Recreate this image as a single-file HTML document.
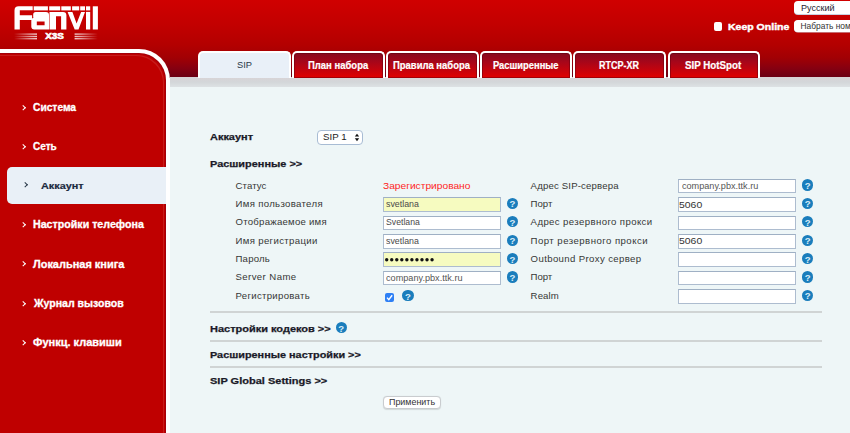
<!DOCTYPE html>
<html><head><meta charset="utf-8">
<style>
*{margin:0;padding:0;box-sizing:border-box}
html,body{width:850px;height:433px;overflow:hidden;background:#eef6f7;font-family:"Liberation Sans",sans-serif}
.a{position:absolute}
.t{position:absolute;white-space:nowrap;line-height:1;transform-origin:0 0}
#hdr{left:0;top:0;width:850px;height:78px;background:linear-gradient(#d00000 0px,#c20000 25px,#b30000 45px,#a10004 58px,#870010 68px,#6b0014 77px)}
#band{left:170px;top:77px;width:680px;height:10px;background:linear-gradient(#d9d4d7,#d3d6d9 50%,#dde2e4)}
#side{left:-4px;top:49px;width:174px;height:400px;background:#bf0000;box-shadow:inset -1px 1px 0 #a3000a,inset -2px 2px 0 #bf0000,inset -3px 3px 0 #c51c1c;border:4px solid #fff;border-left:0;border-top-right-radius:31px}
.arr{position:absolute;width:3.5px;height:3.5px;border-right:1.4px solid #fff;border-bottom:1.4px solid #fff;transform:rotate(-45deg)}
#act{left:7px;top:167px;width:159px;height:36.5px;background:#e9f0f7;border-radius:5px 0 0 5px}
.tab{position:absolute;top:50.8px;height:27px;width:92.5px;border:2px solid #fff;border-bottom:0;border-radius:5px 5px 0 0;background:linear-gradient(#850a1e,#a6061a 35%,#e20000);box-shadow:inset 0 0 0 1px rgba(90,0,15,0.45)}
.inp{position:absolute;width:118px;height:14.6px;background:#fff;border:1px solid #adbccf;border-top-color:#9fb0c4}
.y{background:#f6fbc0}
.q{position:absolute;width:11.2px;height:11.2px;border-radius:50%;background:#1a7dbc}
.hr{position:absolute;left:210px;width:612px;height:1.5px;background:#d0d4d4}
</style></head><body>
<div id="hdr" class="a"></div>
<div id="band" class="a"></div>

<svg class="a" style="left:0;top:0" width="120" height="45" viewBox="0 0 120 45">
  <defs>
    <linearGradient id="gl" x1="0" x2="1"><stop offset="0" stop-color="#fff" stop-opacity="0"/><stop offset="0.7" stop-color="#fff" stop-opacity="0.6"/><stop offset="1" stop-color="#fff" stop-opacity="0.8"/></linearGradient>
    <linearGradient id="gr" x1="1" x2="0"><stop offset="0" stop-color="#fff" stop-opacity="0"/><stop offset="0.7" stop-color="#fff" stop-opacity="0.6"/><stop offset="1" stop-color="#fff" stop-opacity="0.8"/></linearGradient>
  </defs>
  <g fill="#fff">
    <path d="M14.5 29.5V10.5Q14.5 6.3 18.7 6.3H32.7V10.3H19.8V15.2H32.1V19.9H19.8V29.5Z"/>
    <rect x="33.7" y="6.3" width="14.2" height="4.1"/>
    <rect x="49.2" y="6.3" width="11" height="4.1"/>
    <rect x="61.3" y="6.3" width="9.5" height="4.1"/>
    <rect x="72.1" y="6.3" width="7.1" height="4.1"/>
    <rect x="80.2" y="6.3" width="4.8" height="4.1"/>
    <rect x="86" y="6.3" width="4.2" height="4.1"/>
    <path d="M35.7 12H46Q49 12 49 15V29.4H34.3Q31.3 29.4 31.3 26.4V20.8Q31.3 17.8 34.3 17.8H33.2V14.5Q33.2 12 35.7 12Z M36.8 21.6V25.3H44.6V21.6Z" fill-rule="evenodd"/>
    <path d="M49.5 29.5V11.9H63Q66.4 11.9 66.4 15.3V29.5H61.1V16.3H56V29.5Z"/>
    <path d="M67.6 11.9H72.4L76.6 23.4L81.1 11.9H85L78.5 29.5H74.7Z"/>
    <rect x="86" y="11.9" width="4.2" height="17.6"/>
    <rect x="92.8" y="6.3" width="5.1" height="23.2"/>
  </g>
  <g>
    <rect x="14" y="33.4" width="23" height="1.4" fill="url(#gl)"/>
    <rect x="14" y="35.8" width="23" height="1.4" fill="url(#gl)"/>
    <rect x="14" y="38" width="23" height="1.4" fill="url(#gl)"/>
    <rect x="74.6" y="33.4" width="23.2" height="1.4" fill="url(#gr)"/>
    <rect x="74.6" y="35.8" width="23.2" height="1.4" fill="url(#gr)"/>
    <rect x="74.6" y="38" width="23.2" height="1.4" fill="url(#gr)"/>
  </g>
  <text x="0" y="0" transform="translate(45.3 39.3) scale(1.12 1)" font-family="Liberation Sans" font-weight="bold" font-size="8.8" fill="#fff" stroke="#fff" stroke-width="0.6">X3S</text>
</svg>

<div class="a" style="left:713.6px;top:22.1px;width:8.8px;height:8.8px;background:#fff;border-radius:2px"></div>
<div class="a" style="left:794px;top:1.1px;width:70px;height:13.2px;background:#fff;border-radius:4px;box-shadow:0 1px 0 #c9d2e2"></div>
<div class="a" style="left:794.2px;top:19.6px;width:70px;height:12.6px;background:#fff;border-radius:4px;box-shadow:0 0.6px 0 #d0d6e0"></div>
<div id="side" class="a"></div>
<div id="act" class="a"></div>
<div class="arr" style="left:20.8px;top:105.50px;border-color:#fff"></div>
<div class="arr" style="left:20.8px;top:144.73px;border-color:#fff"></div>
<div class="arr" style="left:22.6px;top:182.86px;border-color:#2a3a4a"></div>
<div class="arr" style="left:20.8px;top:223.19px;border-color:#fff"></div>
<div class="arr" style="left:20.8px;top:262.42px;border-color:#fff"></div>
<div class="arr" style="left:20.8px;top:301.65px;border-color:#fff"></div>
<div class="arr" style="left:20.8px;top:340.88px;border-color:#fff"></div>
<div class="tab" style="left:198px;background:#e9f0f8;box-shadow:none;"></div>
<div class="tab" style="left:292px;"></div>
<div class="tab" style="left:386px;"></div>
<div class="tab" style="left:479.5px;"></div>
<div class="tab" style="left:573.3px;"></div>
<div class="tab" style="left:667.5px;"></div>
<div class="a" style="left:316.6px;top:129.6px;width:46.4px;height:15.2px;background:#fff;border:1.2px solid #a8bcd4;border-radius:4px"></div>
<svg class="a" style="left:354px;top:133px" width="6" height="9" viewBox="0 0 6 9"><path d="M3 0.8L5.2 3.6H0.8Z M3 8.3L5.2 5.3H0.8Z" fill="#111"/></svg>
<div class="inp" style="left:678px;top:178.75px"></div>
<div class="q" style="left:802.1px;top:179.40px"></div>
<div class="inp" style="left:678px;top:197.15px"></div>
<div class="q" style="left:802.1px;top:197.80px"></div>
<div class="inp y" style="left:383px;top:197.15px"></div>
<div class="q" style="left:506.9px;top:197.80px"></div>
<div class="inp" style="left:678px;top:215.55px"></div>
<div class="q" style="left:802.1px;top:216.20px"></div>
<div class="inp" style="left:383px;top:215.55px"></div>
<div class="q" style="left:506.9px;top:216.20px"></div>
<div class="inp" style="left:678px;top:233.95px"></div>
<div class="q" style="left:802.1px;top:234.60px"></div>
<div class="inp" style="left:383px;top:233.95px"></div>
<div class="q" style="left:506.9px;top:234.60px"></div>
<div class="inp" style="left:678px;top:252.35px"></div>
<div class="q" style="left:802.1px;top:253.00px"></div>
<div class="inp y" style="left:383px;top:252.35px"></div>
<div class="q" style="left:506.9px;top:253.00px"></div>
<div class="inp" style="left:678px;top:270.75px"></div>
<div class="q" style="left:802.1px;top:271.40px"></div>
<div class="inp" style="left:383px;top:270.75px"></div>
<div class="q" style="left:506.9px;top:271.40px"></div>
<div class="inp" style="left:678px;top:289.15px"></div>
<div class="q" style="left:802.1px;top:289.80px"></div>
<svg class="a" style="left:385px;top:258.3px" width="52" height="4" viewBox="0 0 52 4" fill="#111"><circle cx="1.70" cy="1.8" r="1.7"/><circle cx="6.74" cy="1.8" r="1.7"/><circle cx="11.78" cy="1.8" r="1.7"/><circle cx="16.82" cy="1.8" r="1.7"/><circle cx="21.86" cy="1.8" r="1.7"/><circle cx="26.90" cy="1.8" r="1.7"/><circle cx="31.94" cy="1.8" r="1.7"/><circle cx="36.98" cy="1.8" r="1.7"/><circle cx="42.02" cy="1.8" r="1.7"/><circle cx="47.06" cy="1.8" r="1.7"/></svg>
<div class="a" style="left:385px;top:292.6px;width:9px;height:9px;background:#2d7ff5;border-radius:2px"></div>
<svg class="a" style="left:385px;top:292.6px" width="9" height="9" viewBox="0 0 9 9"><path d="M2 4.6L3.8 6.6L7.2 2.2" stroke="#fff" stroke-width="1.4" fill="none"/></svg>
<div class="q" style="left:402.4px;top:290.2px"></div>
<div class="hr" style="top:311px"></div>
<div class="q" style="left:335.6px;top:322.1px"></div>
<div class="hr" style="top:340px"></div>
<div class="hr" style="top:366px"></div>
<div class="a" style="left:383.2px;top:395.6px;width:58px;height:13px;background:#fff;border:1px solid #c9cccf;border-radius:4px;box-shadow:0 0.5px 1px rgba(0,0,0,0.12)"></div>
<div class="t" style="left:804.70px;top:181.00px;font-size:9.6px;font-weight:bold;color:#d6ebf7">?</div><div class="t" style="left:804.70px;top:199.40px;font-size:9.6px;font-weight:bold;color:#d6ebf7">?</div><div class="t" style="left:509.50px;top:199.40px;font-size:9.6px;font-weight:bold;color:#d6ebf7">?</div><div class="t" style="left:804.70px;top:217.80px;font-size:9.6px;font-weight:bold;color:#d6ebf7">?</div><div class="t" style="left:509.50px;top:217.80px;font-size:9.6px;font-weight:bold;color:#d6ebf7">?</div><div class="t" style="left:804.70px;top:236.20px;font-size:9.6px;font-weight:bold;color:#d6ebf7">?</div><div class="t" style="left:509.50px;top:236.20px;font-size:9.6px;font-weight:bold;color:#d6ebf7">?</div><div class="t" style="left:804.70px;top:254.60px;font-size:9.6px;font-weight:bold;color:#d6ebf7">?</div><div class="t" style="left:509.50px;top:254.60px;font-size:9.6px;font-weight:bold;color:#d6ebf7">?</div><div class="t" style="left:804.70px;top:273.00px;font-size:9.6px;font-weight:bold;color:#d6ebf7">?</div><div class="t" style="left:509.50px;top:273.00px;font-size:9.6px;font-weight:bold;color:#d6ebf7">?</div><div class="t" style="left:804.70px;top:291.40px;font-size:9.6px;font-weight:bold;color:#d6ebf7">?</div><div class="t" style="left:405.00px;top:291.80px;font-size:9.6px;font-weight:bold;color:#d6ebf7">?</div><div class="t" style="left:338.20px;top:323.70px;font-size:9.6px;font-weight:bold;color:#d6ebf7">?</div>
<div class="t" style="left:33.00px;top:103.00px;font-size:10.2px;font-weight:bold;color:#fff;transform:scaleX(1.0044);-webkit-text-stroke:0.3px #fff;">Система</div>
<div class="t" style="left:33.00px;top:142.00px;font-size:10.2px;font-weight:bold;color:#fff;transform:scaleX(0.9800);-webkit-text-stroke:0.3px #fff;">Сеть</div>
<div class="t" style="left:40.90px;top:181.00px;font-size:9.4px;font-weight:bold;color:#1b2a40;transform:scaleX(1.1572);-webkit-text-stroke:0.2px #1b2a40;">Аккаунт</div>
<div class="t" style="left:32.90px;top:220.00px;font-size:10.2px;font-weight:bold;color:#fff;transform:scaleX(1.0452);-webkit-text-stroke:0.3px #fff;">Настройки телефона</div>
<div class="t" style="left:33.00px;top:260.00px;font-size:10.2px;font-weight:bold;color:#fff;transform:scaleX(1.0760);-webkit-text-stroke:0.3px #fff;">Локальная книга</div>
<div class="t" style="left:34.04px;top:299.00px;font-size:10.2px;font-weight:bold;color:#fff;transform:scaleX(1.0351);-webkit-text-stroke:0.3px #fff;">Журнал вызовов</div>
<div class="t" style="left:33.00px;top:338.00px;font-size:10.2px;font-weight:bold;color:#fff;transform:scaleX(1.0804);-webkit-text-stroke:0.3px #fff;">Функц. клавиши</div>
<div class="t" style="left:236.60px;top:60.00px;font-size:9.8px;font-weight:normal;color:#2c3a4a;transform:scaleX(0.9535);">SIP</div>
<div class="t" style="left:307.90px;top:61.00px;font-size:10.2px;font-weight:bold;color:#fff;transform:scaleX(0.9308);-webkit-text-stroke:0.2px #fff;">План набора</div>
<div class="t" style="left:393.10px;top:61.00px;font-size:10.2px;font-weight:bold;color:#fff;transform:scaleX(0.9284);-webkit-text-stroke:0.2px #fff;">Правила набора</div>
<div class="t" style="left:493.10px;top:61.00px;font-size:10.2px;font-weight:bold;color:#fff;transform:scaleX(0.9185);-webkit-text-stroke:0.2px #fff;">Расширенные</div>
<div class="t" style="left:599.20px;top:61.00px;font-size:10.2px;font-weight:bold;color:#fff;transform:scaleX(0.8842);-webkit-text-stroke:0.2px #fff;">RTCP-XR</div>
<div class="t" style="left:684.80px;top:61.00px;font-size:10.2px;font-weight:bold;color:#fff;transform:scaleX(0.9586);-webkit-text-stroke:0.2px #fff;">SIP HotSpot</div>
<div class="t" style="left:728.00px;top:22.00px;font-size:9.8px;font-weight:bold;color:#fff;transform:scaleX(1.0726);-webkit-text-stroke:0.45px #fff;">Keep Online</div>
<div class="t" style="left:801.40px;top:4.00px;font-size:8.4px;font-weight:normal;color:#1e2230;transform:scaleX(1.0797);">Русский</div>
<div class="t" style="left:800.50px;top:22.00px;font-size:8.4px;font-weight:normal;color:#333;">Набрать номер</div>
<div class="t" style="left:209.90px;top:132.00px;font-size:9.5px;font-weight:bold;color:#1a1a28;transform:scaleX(1.1520);-webkit-text-stroke:0.25px #1a1a28;">Аккаунт</div>
<div class="t" style="left:210.40px;top:159.00px;font-size:9.5px;font-weight:bold;color:#1a1a28;transform:scaleX(1.1489);-webkit-text-stroke:0.25px #1a1a28;">Расширенные &gt;&gt;</div>
<div class="t" style="left:210.30px;top:324.00px;font-size:9.5px;font-weight:bold;color:#1a1a28;transform:scaleX(1.1560);-webkit-text-stroke:0.25px #1a1a28;">Настройки кодеков &gt;&gt;</div>
<div class="t" style="left:210.30px;top:350.00px;font-size:9.5px;font-weight:bold;color:#1a1a28;transform:scaleX(1.1434);-webkit-text-stroke:0.25px #1a1a28;">Расширенные настройки &gt;&gt;</div>
<div class="t" style="left:210.30px;top:376.00px;font-size:9.5px;font-weight:bold;color:#1a1a28;transform:scaleX(1.1590);-webkit-text-stroke:0.25px #1a1a28;">SIP Global Settings &gt;&gt;</div>
<div class="t" style="left:323.20px;top:133.00px;font-size:9.0px;font-weight:normal;color:#222;transform:scaleX(1.0769);">SIP 1</div>
<div class="t" style="left:235.50px;top:181.00px;font-size:9.6px;font-weight:normal;color:#363636;letter-spacing:0.114px;">Статус</div>
<div class="t" style="left:530.60px;top:181.00px;font-size:9.6px;font-weight:normal;color:#363636;letter-spacing:0.168px;">Адрес SIP-сервера</div>
<div class="t" style="left:235.50px;top:199.00px;font-size:9.6px;font-weight:normal;color:#363636;letter-spacing:0.333px;">Имя пользователя</div>
<div class="t" style="left:530.60px;top:199.00px;font-size:9.6px;font-weight:normal;color:#363636;letter-spacing:0.015px;">Порт</div>
<div class="t" style="left:235.50px;top:217.00px;font-size:9.6px;font-weight:normal;color:#363636;letter-spacing:0.245px;">Отображаемое имя</div>
<div class="t" style="left:530.60px;top:217.00px;font-size:9.6px;font-weight:normal;color:#363636;letter-spacing:0.394px;">Адрес резервного прокси</div>
<div class="t" style="left:235.50px;top:236.00px;font-size:9.6px;font-weight:normal;color:#363636;letter-spacing:0.350px;">Имя регистрации</div>
<div class="t" style="left:530.60px;top:236.00px;font-size:9.6px;font-weight:normal;color:#363636;letter-spacing:0.465px;">Порт резервного прокси</div>
<div class="t" style="left:235.50px;top:254.00px;font-size:9.6px;font-weight:normal;color:#363636;letter-spacing:0.202px;">Пароль</div>
<div class="t" style="left:530.60px;top:254.00px;font-size:9.6px;font-weight:normal;color:#363636;letter-spacing:0.371px;">Outbound Proxy сервер</div>
<div class="t" style="left:235.50px;top:272.00px;font-size:9.6px;font-weight:normal;color:#363636;letter-spacing:0.412px;">Server Name</div>
<div class="t" style="left:530.60px;top:272.00px;font-size:9.6px;font-weight:normal;color:#363636;letter-spacing:-0.085px;">Порт</div>
<div class="t" style="left:235.50px;top:291.00px;font-size:9.6px;font-weight:normal;color:#363636;letter-spacing:0.305px;">Регистрировать</div>
<div class="t" style="left:530.60px;top:291.00px;font-size:9.6px;font-weight:normal;color:#363636;letter-spacing:0.117px;">Realm</div>
<div class="t" style="left:382.70px;top:182.00px;font-size:9.2px;font-weight:normal;color:#ff2626;transform:scaleX(1.1109);">Зарегистрировано</div>
<div class="t" style="left:386.10px;top:200.00px;font-size:9.0px;font-weight:normal;color:#4a4a4a;transform:scaleX(0.9816);">svetlana</div>
<div class="t" style="left:386.10px;top:218.00px;font-size:9.0px;font-weight:normal;color:#4a4a4a;transform:scaleX(0.9652);">Svetlana</div>
<div class="t" style="left:386.10px;top:237.00px;font-size:9.0px;font-weight:normal;color:#4a4a4a;transform:scaleX(0.9816);">svetlana</div>
<div class="t" style="left:386.00px;top:274.00px;font-size:9.0px;font-weight:normal;color:#555;transform:scaleX(1.0151);">company.pbx.ttk.ru</div>
<div class="t" style="left:681.70px;top:182.00px;font-size:9.0px;font-weight:normal;color:#555;transform:scaleX(1.0125);">company.pbx.ttk.ru</div>
<div class="t" style="left:679.40px;top:201.00px;font-size:9.3px;font-weight:normal;color:#333;transform:scaleX(1.1213);">5060</div>
<div class="t" style="left:679.40px;top:237.00px;font-size:9.3px;font-weight:normal;color:#333;transform:scaleX(1.1213);">5060</div>
<div class="t" style="left:389.00px;top:398.00px;font-size:8.6px;font-weight:normal;color:#333;transform:scaleX(1.0372);">Применить</div>
</body></html>
